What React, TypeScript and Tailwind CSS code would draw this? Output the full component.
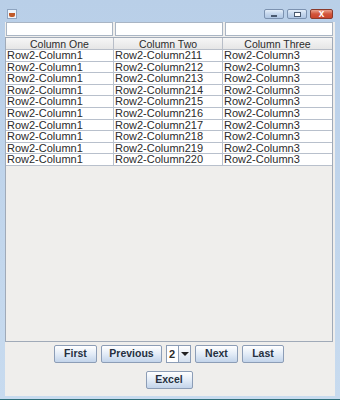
const rows = Array.from({ length: 10 }, (_, i) => ({
  a: "Row2-Column1",
  b: `Row2-Column2${11 + i}`,
  c: "Row2-Column3",
}));

function TitleButton({ kind }: { kind: "min" | "max" | "close" }) {
  const base =
    kind === "close"
      ? "bg-gradient-to-b from-[#e8a08c] via-[#d2543a] to-[#c9452c] border-[#8a3a2c] w-[23px]"
      : "bg-gradient-to-b from-[#e4eef9] via-[#c4d6ec] to-[#afc6e3] border-[#7c92b0] w-[20px]";
  return (
    <div className={`h-[10px] border rounded-[2px] flex items-center justify-center ${base}`}>
      {kind === "min" && <div className="w-[6px] h-[2px] bg-white border border-[#4a5a70] mt-[3px]" />}
      {kind === "max" && <div className="w-[7px] h-[5px] border border-[#4a5a70] bg-white" />}
      {kind === "close" && <span className="text-white text-[10px] font-bold leading-none">x</span>}
    </div>
  );
}

function Btn({ label, w }: { label: string; w: string }) {
  return (
    <div
      className={`${w} h-[18px] border border-[#8c9db6] rounded-[2px] bg-gradient-to-b from-[#ffffff] via-[#e3ecf7] to-[#c3d4ea] flex items-center justify-center text-[10.5px] font-bold text-[#25303f]`}
    >
      {label}
    </div>
  );
}

export default function App() {
  return (
    <div
      className="w-[340px] h-[400px] bg-gradient-to-b from-[#b9cfe8] to-[#c8dbef] flex flex-col overflow-hidden"
      style={{ fontFamily: '"Liberation Sans", Arial, sans-serif' }}
    >
      {/* title bar */}
      <div className="h-[22px] flex items-start px-[7px] pt-[9px] shrink-0">
        <div className="w-[10px] h-[10px] border border-[#8ea4c0] bg-[#eef3f9] flex items-end justify-center">
          <div className="w-[6px] h-[4px] bg-[#c05a2a] rounded-b-[2px] mb-[1px]" />
        </div>
        <div className="flex-1" />
        <div className="flex gap-[3px]">
          <TitleButton kind="min" />
          <TitleButton kind="max" />
          <TitleButton kind="close" />
        </div>
      </div>

      {/* content */}
      <div className="mx-[5px] h-[374px] bg-[#efeeec] flex flex-col text-[11px] text-[#2b2b2b]">
        <div className="flex gap-[2px] pl-[1px] pr-[2px] h-[14px]">
          <div className="w-[107px] bg-white border border-[#a9b5c4]" />
          <div className="w-[108px] bg-white border border-[#a9b5c4]" />
          <div className="flex-1 bg-white border border-[#a9b5c4]" />
        </div>

        <div className="mt-[1px] mr-[2px] h-[305px] border border-[#a0aab8] flex flex-col">
          <div className="flex h-[12px] bg-gradient-to-b from-[#f6f6f6] to-[#e6e6e6] border-b border-[#b8bec8] text-[10.5px]">
            <div className="w-[108px] border-r border-[#b8bec8] text-center leading-[12px]">Column One</div>
            <div className="w-[109px] border-r border-[#b8bec8] text-center leading-[12px]">Column Two</div>
            <div className="flex-1 text-center leading-[12px]">Column Three</div>
          </div>
          <div className="bg-white">
            {rows.map((r, i) => (
              <div key={i} className="flex h-[11.6px] border-b border-[#b8c0cc] leading-[11px]">
                <div className="w-[108px] border-r border-[#b8c0cc] pl-[1px]">{r.a}</div>
                <div className="w-[109px] border-r border-[#b8c0cc] pl-[1px]">{r.b}</div>
                <div className="flex-1 pl-[1px]">{r.c}</div>
              </div>
            ))}
          </div>
        </div>

        <div className="flex justify-center items-center gap-[4px] mt-[3px] pr-[2px]">
          <Btn label="First" w="w-[43px]" />
          <Btn label="Previous" w="w-[61px]" />
          <div className="w-[25px] h-[18px] border border-[#8c9db6] bg-white flex">
            <div className="w-[11px] text-[11px] font-bold leading-[16px] pl-[2px]">2</div>
            <div className="flex-1 border-l border-[#8c9db6] bg-gradient-to-b from-white to-[#d4e0ef] flex items-center justify-center">
              <div className="w-0 h-0 border-l-[4px] border-r-[4px] border-t-[4px] border-l-transparent border-r-transparent border-t-[#222]" />
            </div>
          </div>
          <Btn label="Next" w="w-[43px]" />
          <Btn label="Last" w="w-[42px]" />
        </div>

        <div className="flex justify-center mt-[8px] pr-[2px]">
          <Btn label="Excel" w="w-[47px]" />
        </div>
      </div>

      <div className="flex-1 border-b border-[#2f6f7a]" />
    </div>
  );
}
